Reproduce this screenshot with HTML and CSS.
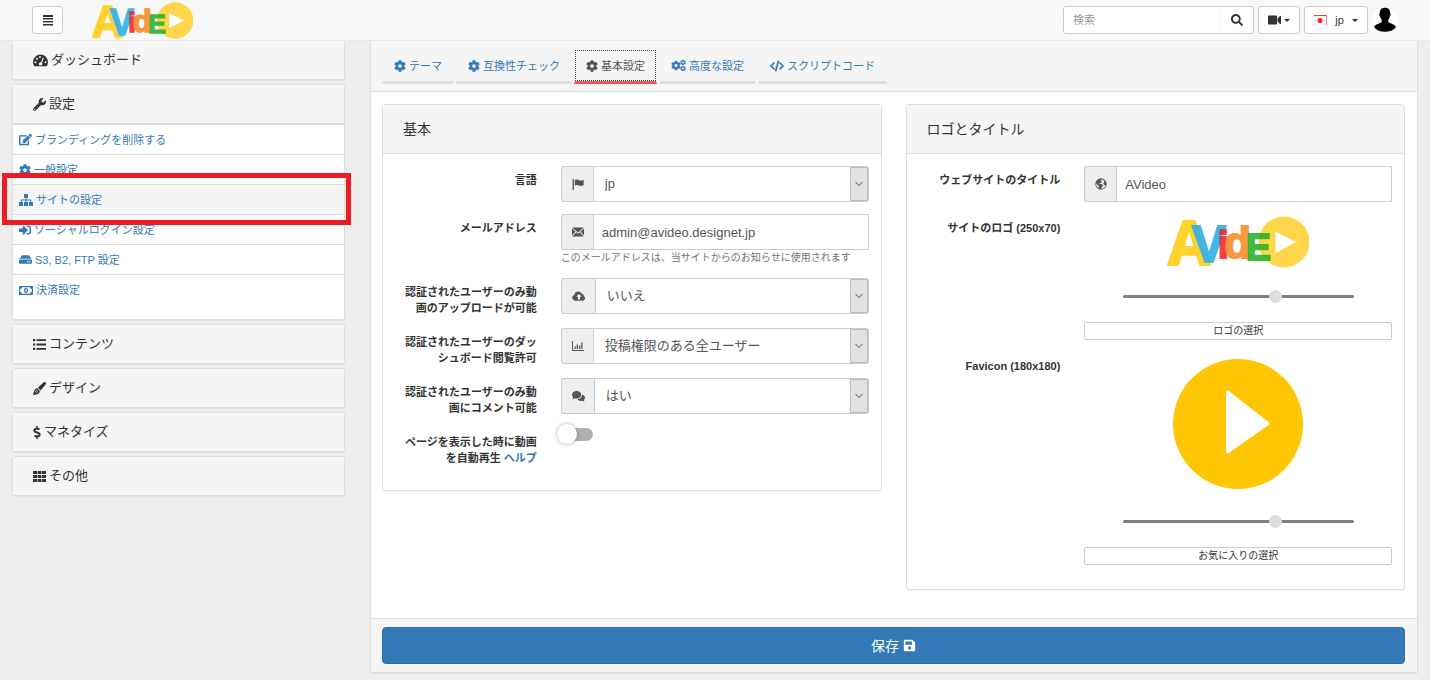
FILE: index.html
```html
<!DOCTYPE html>
<html lang="ja">
<head>
<meta charset="utf-8">
<title>AVideo サイトの設定</title>
<link rel="stylesheet" href="styles.css">
</head>
<body>
<svg class="sprite" aria-hidden="true">
  <symbol id="bars" viewBox="0 0 12 12"><path d="M1 1h10v2H1zM1 4h10v1.500H1zM1 7h10v1.500H1zM1 10h10v1.500H1z"/></symbol>
  <symbol id="search" viewBox="0 0 512 512"><path d="M505 442.700L405.300 343c-4.500-4.500-10.600-7-17-7H372c27.600-35.300 44-79.700 44-128C416 93.100 322.900 0 208 0S0 93.100 0 208s93.100 208 208 208c48.300 0 92.700-16.400 128-44v16.300c0 6.400 2.500 12.500 7 17l99.700 99.700c9.400 9.400 24.600 9.400 33.900 0l28.300-28.300c9.400-9.400 9.400-24.600.1-34zM208 336c-70.700 0-128-57.200-128-128 0-70.700 57.200-128 128-128 70.700 0 128 57.200 128 128 0 70.700-57.200 128-128 128z"/></symbol>
  <symbol id="video" viewBox="0 0 13 10"><path d="M1 0h7a1 1 0 0 1 1 1v7a1 1 0 0 1-1 1H1a1 1 0 0 1-1-1V1a1 1 0 0 1 1-1zM9.500 3L12 .5q1-.5 1 .5v7q0 1-1 .5L9.500 6z"/></symbol>
  <symbol id="gauge" viewBox="0 0 15 13"><path fill-rule="evenodd" d="M7.500.5A7.500 7.500 0 0 0 0 8c0 1.600.4 3 1.200 4.200h12.600C14.600 11 15 9.600 15 8A7.500 7.500 0 0 0 7.500.5zM2.400 7.300a1 1 0 1 1 0 2 1 1 0 0 1 0-2zM4 3.800a1 1 0 1 1 0 2 1 1 0 0 1 0-2zM7 2a1 1 0 1 1 0 2 1 1 0 0 1 0-2zM12.600 7.300a1 1 0 1 1 0 2 1 1 0 0 1 0-2zM9.800 3.500l1 .4-1.700 4.800a1.900 1.900 0 0 1-.3 2.500H6.200a1.900 1.900 0 0 1 1.900-3z"/></symbol>
  <symbol id="wrench" viewBox="0 0 512 512"><path d="M507.730 109.100c-2.240-9.030-13.540-12.090-20.120-5.510l-74.360 74.360-67.880-11.310-11.310-67.880 74.360-74.360c6.620-6.620 3.430-17.900-5.660-20.160-47.380-11.740-99.550.91-136.580 37.930-39.640 39.640-50.550 97.100-34.050 147.200L18.740 402.760c-24.990 24.990-24.990 65.510 0 90.500 24.990 24.990 65.510 24.990 90.500 0l213.210-213.210c50.120 16.710 107.470 5.680 147.370-34.220 37.070-37.070 49.700-89.320 37.910-136.730zM64 472c-13.250 0-24-10.750-24-24 0-13.260 10.750-24 24-24s24 10.740 24 24c0 13.250-10.750 24-24 24z"/></symbol>
  <symbol id="list" viewBox="0 0 13 13"><path d="M0 1h2.200v2.200H0zM0 5.400h2.200v2.200H0zM0 9.800h2.200V12H0zM3.500 1.200H13V3H3.500zM3.500 5.600H13v1.800H3.500zM3.500 10H13v1.800H3.500z"/></symbol>
  <symbol id="brush" viewBox="0 0 13 13"><path fill-rule="evenodd" d="M12.600.5c.6.600.5 1.500 0 2.100L7.500 8.400 4.800 5.800 10.500.5c.6-.5 1.500-.6 2.100 0zM4.200 6.300l2.700 2.600c-.2 1.900-1.200 2.900-3 3.300C2.500 12.500 1.200 13 .2 13c.4-1 .2-2 .8-3.700.5-1.600 1.600-2.700 3.200-3zM3.500 8c-1 .6-1.300 1.600-1.500 2.600l1-.9a.8.800 0 1 1 .7.700l-.9.900c1.300-.2 2.100-.7 2.500-1.800z"/></symbol>
  <symbol id="dollar" viewBox="0 0 288 512"><path d="M209.200 233.400l-108-31.600C88.700 198.200 80 186.500 80 173.500c0-16.300 13.200-29.500 29.500-29.500h66.300c12.200 0 24.200 3.700 34.200 10.500 6.100 4.100 14.300 3.100 19.500-2l34.800-34c7.100-6.900 6.100-18.400-1.800-24.500C238 74.800 207.400 64.100 176 64V16c0-8.800-7.200-16-16-16h-32c-8.800 0-16 7.200-16 16v48h-2.500C45.800 64-5.400 118.700.5 183.600c4.200 46.100 39.400 83.600 83.800 96.600l102.500 30c12.500 3.700 21.200 15.300 21.200 28.300 0 16.300-13.200 29.500-29.500 29.500h-66.300C100 368 88 364.300 78 357.500c-6.100-4.100-14.300-3.100-19.500 2l-34.800 34c-7.100 6.900-6.100 18.400 1.800 24.500 24.500 19.200 55.100 29.900 86.500 30v48c0 8.800 7.200 16 16 16h32c8.800 0 16-7.200 16-16v-48.200c46.600-.9 90.300-28.600 105.700-72.700 21.500-61.600-14.600-124.800-72.500-141.700z"/></symbol>
  <symbol id="grid" viewBox="0 0 13 13"><path d="M0 1h4v3H0zM4.600 1h3.800v3H4.600zM9 1h4v3H9zM0 5h4v3H0zM4.600 5h3.800v3H4.600zM9 5h4v3H9zM0 9h4v3H0zM4.600 9h3.800v3H4.600zM9 9h4v3H9z"/></symbol>
  <symbol id="edit" viewBox="0 0 576 512"><path d="M402.600 83.200l90.200 90.200c3.800 3.800 3.800 10 0 13.800L274.400 405.600l-92.800 10.300c-12.400 1.400-22.900-9.100-21.500-21.500l10.300-92.800L388.800 83.200c3.800-3.800 10-3.800 13.800 0zm162-22.900l-48.800-48.800c-15.200-15.200-39.900-15.200-55.200 0l-35.400 35.400c-3.800 3.800-3.800 10 0 13.800l90.200 90.200c3.800 3.800 10 3.800 13.800 0l35.400-35.400c15.200-15.300 15.200-40 0-55.200zM384 346.200V448H64V128h229.800c3.200 0 6.200-1.300 8.500-3.500l40-40c7.600-7.600 2.200-20.500-8.500-20.500H48C21.500 64 0 85.500 0 112v352c0 26.500 21.500 48 48 48h352c26.500 0 48-21.500 48-48V306.200c0-10.700-12.900-16-20.500-8.500l-40 40c-2.200 2.300-3.500 5.300-3.500 8.500z"/></symbol>
  <symbol id="cog" viewBox="0 0 512 512"><path d="M487.400 315.700l-42.600-24.600c4.300-23.200 4.300-47 0-70.200l42.600-24.600c4.900-2.800 7.100-8.600 5.500-14-11.100-35.600-30-67.800-54.700-94.600-3.800-4.100-10-5.100-14.800-2.300L380.800 110c-17.900-15.400-38.500-27.300-60.800-35.100V25.800c0-5.600-3.900-10.500-9.400-11.700-36.700-8.200-74.300-7.800-109.200 0-5.500 1.200-9.400 6.100-9.400 11.700V75c-22.200 7.900-42.800 19.800-60.800 35.100L88.700 85.500c-4.900-2.800-11-1.900-14.800 2.300-24.700 26.700-43.600 58.900-54.700 94.600-1.700 5.400.6 11.200 5.500 14L67.300 221c-4.300 23.200-4.300 47 0 70.200l-42.600 24.600c-4.900 2.800-7.100 8.600-5.500 14 11.100 35.600 30 67.800 54.700 94.600 3.800 4.100 10 5.100 14.800 2.300l42.600-24.600c17.900 15.400 38.500 27.300 60.800 35.100v49.200c0 5.600 3.900 10.500 9.400 11.700 36.700 8.200 74.300 7.800 109.200 0 5.500-1.200 9.400-6.100 9.400-11.700v-49.200c22.200-7.900 42.800-19.800 60.800-35.100l42.600 24.600c4.900 2.800 11 1.900 14.800-2.300 24.700-26.700 43.600-58.900 54.700-94.600 1.500-5.500-.7-11.300-5.600-14.100zM256 336c-44.100 0-80-35.900-80-80s35.900-80 80-80 80 35.900 80 80-35.900 80-80 80z"/></symbol>
  <symbol id="cogs" viewBox="0 0 15 12"><use href="#cog" x="0" y="1" width="10" height="10"/><use href="#cog" x="9" y="0" width="6" height="6"/><use href="#cog" x="9" y="6" width="6" height="6"/></symbol>
  <symbol id="sitemap" viewBox="0 0 14 12"><path d="M5 0h4v4H7.500v1.500h4.700V8H14v4h-4V8h1.200V6.500H7.500V8H9v4H5V8h1.500V6.500H2.800V8H4v4H0V8h1.800V5.500h4.700V4H5z"/></symbol>
  <symbol id="signin" viewBox="0 0 512 512"><path d="M416 448h-84c-6.600 0-12-5.400-12-12v-40c0-6.600 5.400-12 12-12h84c17.700 0 32-14.300 32-32V160c0-17.700-14.300-32-32-32h-84c-6.600 0-12-5.400-12-12V76c0-6.600 5.400-12 12-12h84c53 0 96 43 96 96v192c0 53-43 96-96 96zm-47-201L201 79c-15-15-41-4.500-41 17v96H24c-13.300 0-24 10.700-24 24v96c0 13.300 10.700 24 24 24h136v96c0 21.500 26 32 41 17l168-168c9.300-9.400 9.300-24.600 0-34z"/></symbol>
  <symbol id="hdd" viewBox="0 0 576 512"><path d="M576 304v96c0 26.510-21.490 48-48 48H48c-26.510 0-48-21.490-48-48v-96c0-26.510 21.490-48 48-48h480c26.510 0 48 21.490 48 48zm-48-80a79.557 79.557 0 0 1 30.777 6.165L462.250 85.374A48.003 48.003 0 0 0 422.311 64H153.689a48 48 0 0 0-39.938 21.374L17.223 230.165A79.557 79.557 0 0 1 48 224h480zm-48 96c-17.673 0-32 14.327-32 32s14.327 32 32 32 32-14.327 32-32-14.327-32-32-32zm-96 0c-17.673 0-32 14.327-32 32s14.327 32 32 32 32-14.327 32-32-14.327-32-32-32z"/></symbol>
  <symbol id="money" viewBox="0 0 14 10"><path fill-rule="evenodd" d="M.5 1h13q.5 0 .5.500v8q0 .5-.5.500H.5Q0 10 0 9.500v-8Q0 1 .5 1zM3 2.200Q3 3.800 1.200 4v3Q3 7.200 3 8.800h8Q11 7.200 12.800 7V4Q11 3.800 11 2.200zM7 2.800c1.200 0 2 1.100 2 2.700s-.8 2.700-2 2.700-2-1.100-2-2.700.8-2.700 2-2.700zM6.200 4v.8h.5v1.600h-.5v.6h1.800v-.6h-.5V4z"/></symbol>
  <symbol id="code" viewBox="0 0 14 11"><path d="M4 2.500L1 5.500l3 3M10 2.500l3 3-3 3M8.200.8L5.800 10.200" fill="none" stroke="currentColor" stroke-width="1.700" stroke-linecap="round"/></symbol>
  <symbol id="flag" viewBox="0 0 11 11"><path d="M.5 1h1.200v10H.5zM2.500 2c1.500-1.300 3-.5 4.200 0 1.400.6 2.500.3 4-.5v5c-1.500.9-3 1-4.200.4-1.200-.5-2.600-.8-4 .1z"/></symbol>
  <symbol id="mail" viewBox="0 0 12 10"><path d="M.2.500h11.600L6 5.500zM0 1.400l3.600 3.200L0 8.600zM12 1.400L8.400 4.600 12 8.600zM4.300 5.300L6 6.800l1.700-1.500 4 4.200H.3z"/></symbol>
  <symbol id="cloud" viewBox="0 0 14 11"><path fill-rule="evenodd" d="M3 10.200A3 3 0 0 1 2.200 4.400 4 4 0 0 1 9.600 3a2.400 2.400 0 0 1 2.200 2.600A2.500 2.500 0 0 1 11.200 10.200zM7 3.500L4.200 6.300H6V9h2V6.300h1.800z"/></symbol>
  <symbol id="chart" viewBox="0 0 12 10"><path d="M0 0h1v9h11v1H0zM2.500 5.500h1.300V8H2.500zM4.700 3.500H6V8H4.700zM7 4.500h1.300V8H7zM9.200 1.500h1.300V8H9.200z"/></symbol>
  <symbol id="comments" viewBox="0 0 13 11"><path d="M4.600 0C7.200 0 9.200 1.600 9.200 3.800S7.200 7.500 4.600 7.500c-.5 0-1-.1-1.500-.2C2.300 7.900 1.400 8.200.3 8.200c.5-.5.800-1 .9-1.700C.4 5.800 0 4.800 0 3.800 0 1.600 2 0 4.600 0zM10 3.600c1.800.5 3 1.700 3 3.200 0 .9-.4 1.700-1.200 2.300.1.600.4 1.100.9 1.500-1 0-1.900-.3-2.600-.8-2 .4-3.800-.2-4.800-1.500C8 8.300 10.200 6.300 10 3.600z"/></symbol>
  <symbol id="globe" viewBox="0 0 12 12"><path fill-rule="evenodd" d="M6 .3a5.700 5.700 0 1 1 0 11.400A5.700 5.700 0 0 1 6 .3zM6.800 1.500L5.500 3 7 3.500 5.800 5H4.200l.8 1h2l1 1.500L6.800 9l-.5 1.900C8.500 10.800 9.900 9.500 10.600 8L9 6.500 8.300 5l1.300-1.300C9 2.600 8 1.800 6.800 1.500zM1.300 5c-.4 2 .3 4 2 5L4 8.500 2.500 7z"/></symbol>
  <symbol id="save" viewBox="0 0 448 512"><path d="M433.941 129.941l-83.882-83.882A48 48 0 0 0 316.118 32H48C21.490 32 0 53.490 0 80v352c0 26.510 21.490 48 48 48h352c26.510 0 48-21.490 48-48V163.882a48 48 0 0 0-14.059-33.941zM224 416c-35.346 0-64-28.654-64-64 0-35.346 28.654-64 64-64s64 28.654 64 64c0 35.346-28.654 64-64 64zm96-304.520V212c0 6.627-5.373 12-12 12H76c-6.627 0-12-5.373-12-12V108c0-6.627 5.373-12 12-12h228.520c3.183 0 6.235 1.264 8.485 3.515l3.480 3.480A11.996 11.996 0 0 1 320 111.480z"/></symbol>
  <symbol id="chevron" viewBox="0 0 8 6"><path d="M.5 1L4 4.500 7.500 1" fill="none" stroke="currentColor"/></symbol>
</svg>

<header class="navbar">
  <button class="btn menu-btn" aria-label="メニュー"><svg class="i12"><use href="#bars"/></svg></button>
  <a class="brand" href="#" aria-label="AVideo">
    <svg class="logo" viewBox="0 0 142 52">
      <circle cx="117" cy="26" r="25.500" fill="#ffd64a"/>
      <path d="M108.500 15.500L129 26l-20.500 11z" fill="#fff"/>
      <text class="l-a" x="1" y="49">A</text>
      <text class="l-v" x="25" y="46">V</text>
      <text class="l-i" x="51" y="42">i</text>
      <text class="l-d" x="57" y="42">d</text>
      <text class="l-e" x="79" y="44">E</text>
    </svg>
  </a>
  <form class="search">
    <input type="text" placeholder="検索" aria-label="検索">
    <button type="button" aria-label="検索する"><svg class="i12"><use href="#search"/></svg></button>
  </form>
  <button class="btn video-btn" aria-label="動画"><svg class="i13"><use href="#video"/></svg><span class="caret"></span></button>
  <button class="btn lang-btn"><span class="jp-flag"></span><span>jp</span><span class="caret"></span></button>
  <a class="avatar" href="#" aria-label="ユーザー"><svg viewBox="0 0 26 26"><path d="M13 .8c3.500 0 5.300 2.200 5.200 5.500.7 0 .7 2-.3 2.900-.3 1.600-.9 2.700-1.700 3.500v2.300c1.700 1.700 6.500 2 7.800 5C21.500 23.300 17.500 24.800 13 24.800S4.500 23.300 2 20c1.300-3 6-3.300 7.700-5v-2.300C8.900 11.900 8.300 10.800 8 9.200 7 8.300 7 6.300 7.800 6.300 7.600 3 9.500.8 13 .8z"/></svg></a>
</header>

<div class="layout">
  <nav class="sidebar">
    <section class="panel"><h2><svg class="i15"><use href="#gauge"/></svg>ダッシュボード</h2></section>
    <section class="panel">
      <h2><svg class="i13"><use href="#wrench"/></svg>設定</h2>
      <ul>
        <li><a href="#"><svg class="i13"><use href="#edit"/></svg>ブランディングを削除する</a></li>
        <li><a href="#"><svg class="i12"><use href="#cog"/></svg>一般設定</a></li>
        <li class="active"><a href="#"><svg class="i14"><use href="#sitemap"/></svg>サイトの設定</a><span class="marker"></span></li>
        <li><a href="#"><svg class="i12"><use href="#signin"/></svg>ソーシャルログイン設定</a></li>
        <li><a href="#"><svg class="i13"><use href="#hdd"/></svg>S3, B2, FTP 設定</a></li>
        <li><a href="#"><svg class="i14"><use href="#money"/></svg>決済設定</a></li>
      </ul>
    </section>
    <section class="panel"><h2><svg class="i13"><use href="#list"/></svg>コンテンツ</h2></section>
    <section class="panel"><h2><svg class="i13"><use href="#brush"/></svg>デザイン</h2></section>
    <section class="panel"><h2><svg class="i8"><use href="#dollar"/></svg>マネタイズ</h2></section>
    <section class="panel"><h2><svg class="i13"><use href="#grid"/></svg>その他</h2></section>
  </nav>

  <main class="panel main">
    <div class="tabs">
      <a href="#"><svg class="i12"><use href="#cog"/></svg>テーマ</a>
      <a href="#"><svg class="i12"><use href="#cog"/></svg>互換性チェック</a>
      <a href="#" class="current"><svg class="i12"><use href="#cog"/></svg>基本設定</a>
      <a href="#"><svg class="i15"><use href="#cogs"/></svg>高度な設定</a>
      <a href="#"><svg class="i14"><use href="#code"/></svg>スクリプトコード</a>
    </div>

    <div class="columns">
      <section class="panel card">
        <h3>基本</h3>
        <form class="fields">
          <div class="row">
            <label for="language">言語</label>
            <div class="group"><span class="addon"><svg class="i12"><use href="#flag"/></svg></span>
              <div class="select"><select id="language"><option>jp</option></select><span class="arrow"><svg><use href="#chevron"/></svg></span></div></div>
          </div>
          <div class="row">
            <label for="email">メールアドレス</label>
            <div>
              <div class="group"><span class="addon"><svg class="i12"><use href="#mail"/></svg></span><input id="email" type="email" value="admin@avideo.designet.jp"></div>
              <p class="help">このメールアドレスは、当サイトからのお知らせに使用されます</p>
            </div>
          </div>
          <div class="row">
            <label for="upload">認証されたユーザーのみ動画のアップロードが可能</label>
            <div class="group"><span class="addon"><svg class="i14"><use href="#cloud"/></svg></span>
              <div class="select"><select id="upload"><option>いいえ</option></select><span class="arrow"><svg><use href="#chevron"/></svg></span></div></div>
          </div>
          <div class="row">
            <label for="dashboard">認証されたユーザーのダッシュボード閲覧許可</label>
            <div class="group"><span class="addon"><svg class="i12"><use href="#chart"/></svg></span>
              <div class="select"><select id="dashboard"><option>投稿権限のある全ユーザー</option></select><span class="arrow"><svg><use href="#chevron"/></svg></span></div></div>
          </div>
          <div class="row">
            <label for="comment">認証されたユーザーのみ動画にコメント可能</label>
            <div class="group"><span class="addon"><svg class="i13"><use href="#comments"/></svg></span>
              <div class="select"><select id="comment"><option>はい</option></select><span class="arrow"><svg><use href="#chevron"/></svg></span></div></div>
          </div>
          <div class="row">
            <label for="autoplay">ページを表示した時に動画を自動再生 <a href="#">ヘルプ</a></label>
            <div><input id="autoplay" class="switch" type="checkbox"></div>
          </div>
        </form>
      </section>

      <section class="panel card">
        <h3>ロゴとタイトル</h3>
        <form class="fields">
          <div class="row">
            <label for="title">ウェブサイトのタイトル</label>
            <div class="group"><span class="addon"><svg class="i12"><use href="#globe"/></svg></span><input id="title" type="text" value="AVideo"></div>
          </div>
          <div class="row">
            <label for="logo-zoom">サイトのロゴ (250x70)</label>
            <div class="cropper">
              <svg class="logo logo-preview" viewBox="0 0 142 52">
                <circle cx="117" cy="26" r="25.500" fill="#ffd64a"/>
                <path d="M108.500 15.500L129 26l-20.500 11z" fill="#fff"/>
                <text class="l-a" x="1" y="49">A</text>
                <text class="l-v" x="25" y="46">V</text>
                <text class="l-i" x="51" y="42">i</text>
                <text class="l-d" x="57" y="42">d</text>
                <text class="l-e" x="79" y="44">E</text>
              </svg>
              <input id="logo-zoom" type="range" min="0" max="100" value="67">
              <button type="button">ロゴの選択</button>
            </div>
          </div>
          <div class="row">
            <label for="icon-zoom">Favicon (180x180)</label>
            <div class="cropper">
              <svg class="icon-preview" viewBox="0 0 130 130"><circle cx="65" cy="65" r="65" fill="#ffc604"/><path d="M54.500 33v60L95 64.500z" fill="#fff" stroke="#fff" stroke-width="3" stroke-linejoin="round"/></svg>
              <input id="icon-zoom" type="range" min="0" max="100" value="67">
              <button type="button">お気に入りの選択</button>
            </div>
          </div>
        </form>
      </section>
    </div>

    <div class="footer"><button class="save-btn">保存<svg class="i13"><use href="#save"/></svg></button></div>
  </main>
</div>
</body>
</html>
```

FILE: styles.css
```css
* { box-sizing: border-box; }

body {
  margin: 0;
  background: #ededed;
  color: #333;
  font-family: "Liberation Sans", "Noto Sans CJK JP", sans-serif;
  font-size: 11px;
  line-height: 16px;
}

button, input, select { font: inherit; color: inherit; }
a { color: #337ab7; text-decoration: none; }
svg { fill: currentColor; flex: none; }
.sprite { position: absolute; width: 0; height: 0; }

.i8 { width: 8px; height: 13px; }
.i12 { width: 12px; height: 12px; }
.i13 { width: 13px; height: 13px; }
.i14 { width: 14px; height: 12px; }
.i15 { width: 15px; height: 13px; }

/* Logo */
.logo {
  display: block;
  font-family: "Liberation Sans", sans-serif;
  font-weight: 700;
}
.logo text { stroke-width: 2px; }
.l-a {
  font-family: "Open Sans", sans-serif;
  font-size: 61px;
  fill: #ffd22e;
  stroke: #ffd22e;
}
.l-v { font-size: 51px; fill: #2fb0ea; stroke: #2fb0ea; opacity: .9; }
.l-i { font-size: 38px; fill: #ee2a36; stroke: #ee2a36; opacity: .9; }
.l-d { font-size: 44px; fill: #f78a28; stroke: #f78a28; opacity: .88; }
.l-e { font-size: 37px; fill: #22b022; stroke: #22b022; opacity: .86; }

/* Top bar */
.navbar {
  display: flex;
  align-items: center;
  gap: 4px;
  height: 41px;
  padding: 0 32px;
  background: #f8f8f8;
  border-bottom: 1px solid #e7e7e7;
}
.btn {
  display: flex;
  align-items: center;
  justify-content: center;
  height: 28px;
  padding: 0 9px;
  background: #fff;
  border: 1px solid #ccc;
  border-radius: 3px;
}
.menu-btn { width: 31px; }
.brand { margin: 0 auto 0 25px; }
.brand .logo { width: 101px; height: 37px; }
.search {
  display: flex;
  width: 191px;
  height: 28px;
  background: #fff;
  border: 1px solid #ccc;
  border-radius: 3px;
}
.search input {
  flex: 1;
  min-width: 0;
  padding: 0 9px;
  border: 0;
  background: none;
}
.search input::placeholder { color: #999; }
.search button {
  display: flex;
  align-items: center;
  padding: 0 10px;
  background: none;
  border: 0;
  border-left: 1px solid #f4f4f4;
}
.caret {
  border-top: 3px solid #333;
  border-left: 3px solid transparent;
  border-right: 3px solid transparent;
}
.video-btn { gap: 3px; }
.lang-btn { width: 64px; gap: 8px; }
.jp-flag {
  width: 13px;
  height: 10px;
  background: radial-gradient(circle at 50% 50%, #f22 2px, #f4f4f4 3px);
  border-top: 1px solid #d44;
  border-right: 1px solid #d88;
}
.avatar {
  width: 26px;
  height: 26px;
  background: #fff;
  border-radius: 50%;
  color: #000;
}
.avatar svg { display: block; }

/* Page */
.layout {
  display: grid;
  grid-template-columns: 333fr 1048fr;
  align-items: start;
  gap: 25px;
  padding: 0 12px 7px;
}
.panel {
  background: #fff;
  border: 1px solid #ddd;
  border-radius: 3px;
  box-shadow: 0 1px 1px rgba(0, 0, 0, .05);
}

/* Sidebar */
.sidebar { display: grid; gap: 4px; }
.sidebar .panel:first-child, .main { border-top: 0; }
.sidebar h2 {
  display: flex;
  align-items: center;
  gap: 3px;
  height: 38px;
  margin: 0;
  padding: 0 20px;
  background: #f5f5f5;
  font-size: 13px;
  font-weight: 400;
}
.sidebar ul {
  margin: 0;
  padding: 0 0 15px;
  list-style: none;
}
.sidebar li {
  position: relative;
  height: 30px;
  border-top: 1px solid #ddd;
}
.sidebar li:first-child {
  height: 31px;
  border-top-width: 2px;
}
.sidebar li a {
  display: flex;
  align-items: center;
  gap: 3px;
  height: 100%;
  padding: 0 6px;
}
.active { background: #f5f5f5; }
.marker {
  position: absolute;
  inset: -12px -7px -11px -11px;
  z-index: 1;
  border: 5px solid #ed1c24;
  pointer-events: none;
}

/* Tabs */
.tabs {
  display: flex;
  gap: 2px;
  padding: 9px 11px 7px;
  background: #f5f5f5;
  border-bottom: 1px solid #ddd;
}
.tabs a {
  display: flex;
  align-items: center;
  gap: 3px;
  height: 34px;
  padding: 0 11px;
  border: solid transparent;
  border-width: 0 1px 3px;
  border-bottom-color: #ddd;
}
.tabs .current {
  border-bottom-color: #f65357;
  color: #555;
  background:
    linear-gradient(90deg, #444 50%, transparent 50%) 0 0 / 2px 1px repeat-x,
    linear-gradient(90deg, #444 50%, transparent 50%) 0 100% / 2px 1px repeat-x,
    linear-gradient(#444 50%, transparent 50%) 0 0 / 1px 2px repeat-y,
    linear-gradient(#444 50%, transparent 50%) 100% 0 / 1px 2px repeat-y;
  background-clip: padding-box;
}

/* Cards */
.columns {
  display: grid;
  grid-template-columns: 1fr 1fr;
  align-items: start;
  gap: 24px;
  padding: 12px 12px 28px 11px;
}
.card h3 {
  margin: 0;
  padding: 16px 20px;
  background: #f5f5f5;
  border-bottom: 1px solid #ddd;
  font-size: 14px;
  font-weight: 400;
}
.fields { padding: 12px 0; }
.row {
  display: grid;
  grid-template-columns: 1fr 2fr;
  align-items: start;
  margin-bottom: 12px;
}
.row > * { margin: 0 12px; }
.row > label {
  padding-top: 6px;
  font-weight: 700;
  text-align: right;
}
.group {
  display: flex;
  height: 36px;
  color: #555;
  font-size: 13px;
}
.addon {
  display: flex;
  align-items: center;
  padding: 0 9px 0 10px;
  background: #eee;
  border: 1px solid #ccc;
  border-right: 0;
  border-radius: 3px 0 0 3px;
}
.group input, .group select {
  width: 100%;
  height: 100%;
  min-width: 0;
  padding: 0 8px;
  background: #fff;
  border: 1px solid #ccc;
}
.group select {
  appearance: none;
  padding: 0 11px;
  border-radius: 0 3px 3px 0;
}
.select { position: relative; flex: 1; }
.arrow {
  position: absolute;
  inset: 1px 1px 1px auto;
  display: grid;
  place-items: center;
  width: 18px;
  background: #e1e1e1;
  border: 1px solid #bbb;
  pointer-events: none;
}
.arrow svg { width: 8px; height: 6px; }
.help {
  margin: 0;
  color: #737373;
  font-size: 10px;
}

.switch {
  appearance: none;
  position: relative;
  display: block;
  width: 32px;
  height: 13px;
  margin: 0;
  background: #b0b0b0;
  border-radius: 7px;
}
.switch::before {
  content: "";
  position: absolute;
  top: -4px;
  left: -4px;
  width: 20px;
  height: 20px;
  background: #fff;
  border-radius: 50%;
  box-shadow: 0 0 4px rgba(0, 0, 0, .3);
}

/* Image pickers */
.cropper {
  display: flex;
  flex-direction: column;
  align-items: center;
}
.logo-preview { width: 142px; height: 52px; margin: 2px 0 22px; }
.icon-preview { width: 130px; height: 130px; margin: 7px 0 26px; }
.cropper input {
  appearance: none;
  width: 75%;
  height: 12px;
  margin: 0 0 20px;
  background: none;
}
.cropper input::-webkit-slider-runnable-track {
  height: 3px;
  background: #808080;
  border-radius: 3px;
}
.cropper input::-webkit-slider-thumb {
  appearance: none;
  width: 13px;
  height: 13px;
  margin-top: -5px;
  background: #ddd;
  border-radius: 50%;
}
.cropper button {
  width: 100%;
  height: 18px;
  padding: 0;
  background: #fff;
  border: 1px solid #ccc;
  border-radius: 2px;
  font-size: 10px;
  line-height: 16px;
}

/* Footer */
.footer {
  padding: 8px 12px 8px 11px;
  background: #f5f5f5;
  border-top: 1px solid #ddd;
}
.save-btn {
  display: flex;
  align-items: center;
  justify-content: center;
  gap: 4px;
  width: 100%;
  height: 37px;
  background: #337ab7;
  border: 1px solid #2e6da4;
  border-radius: 4px;
  color: #fff;
  font-size: 14px;
}
```
